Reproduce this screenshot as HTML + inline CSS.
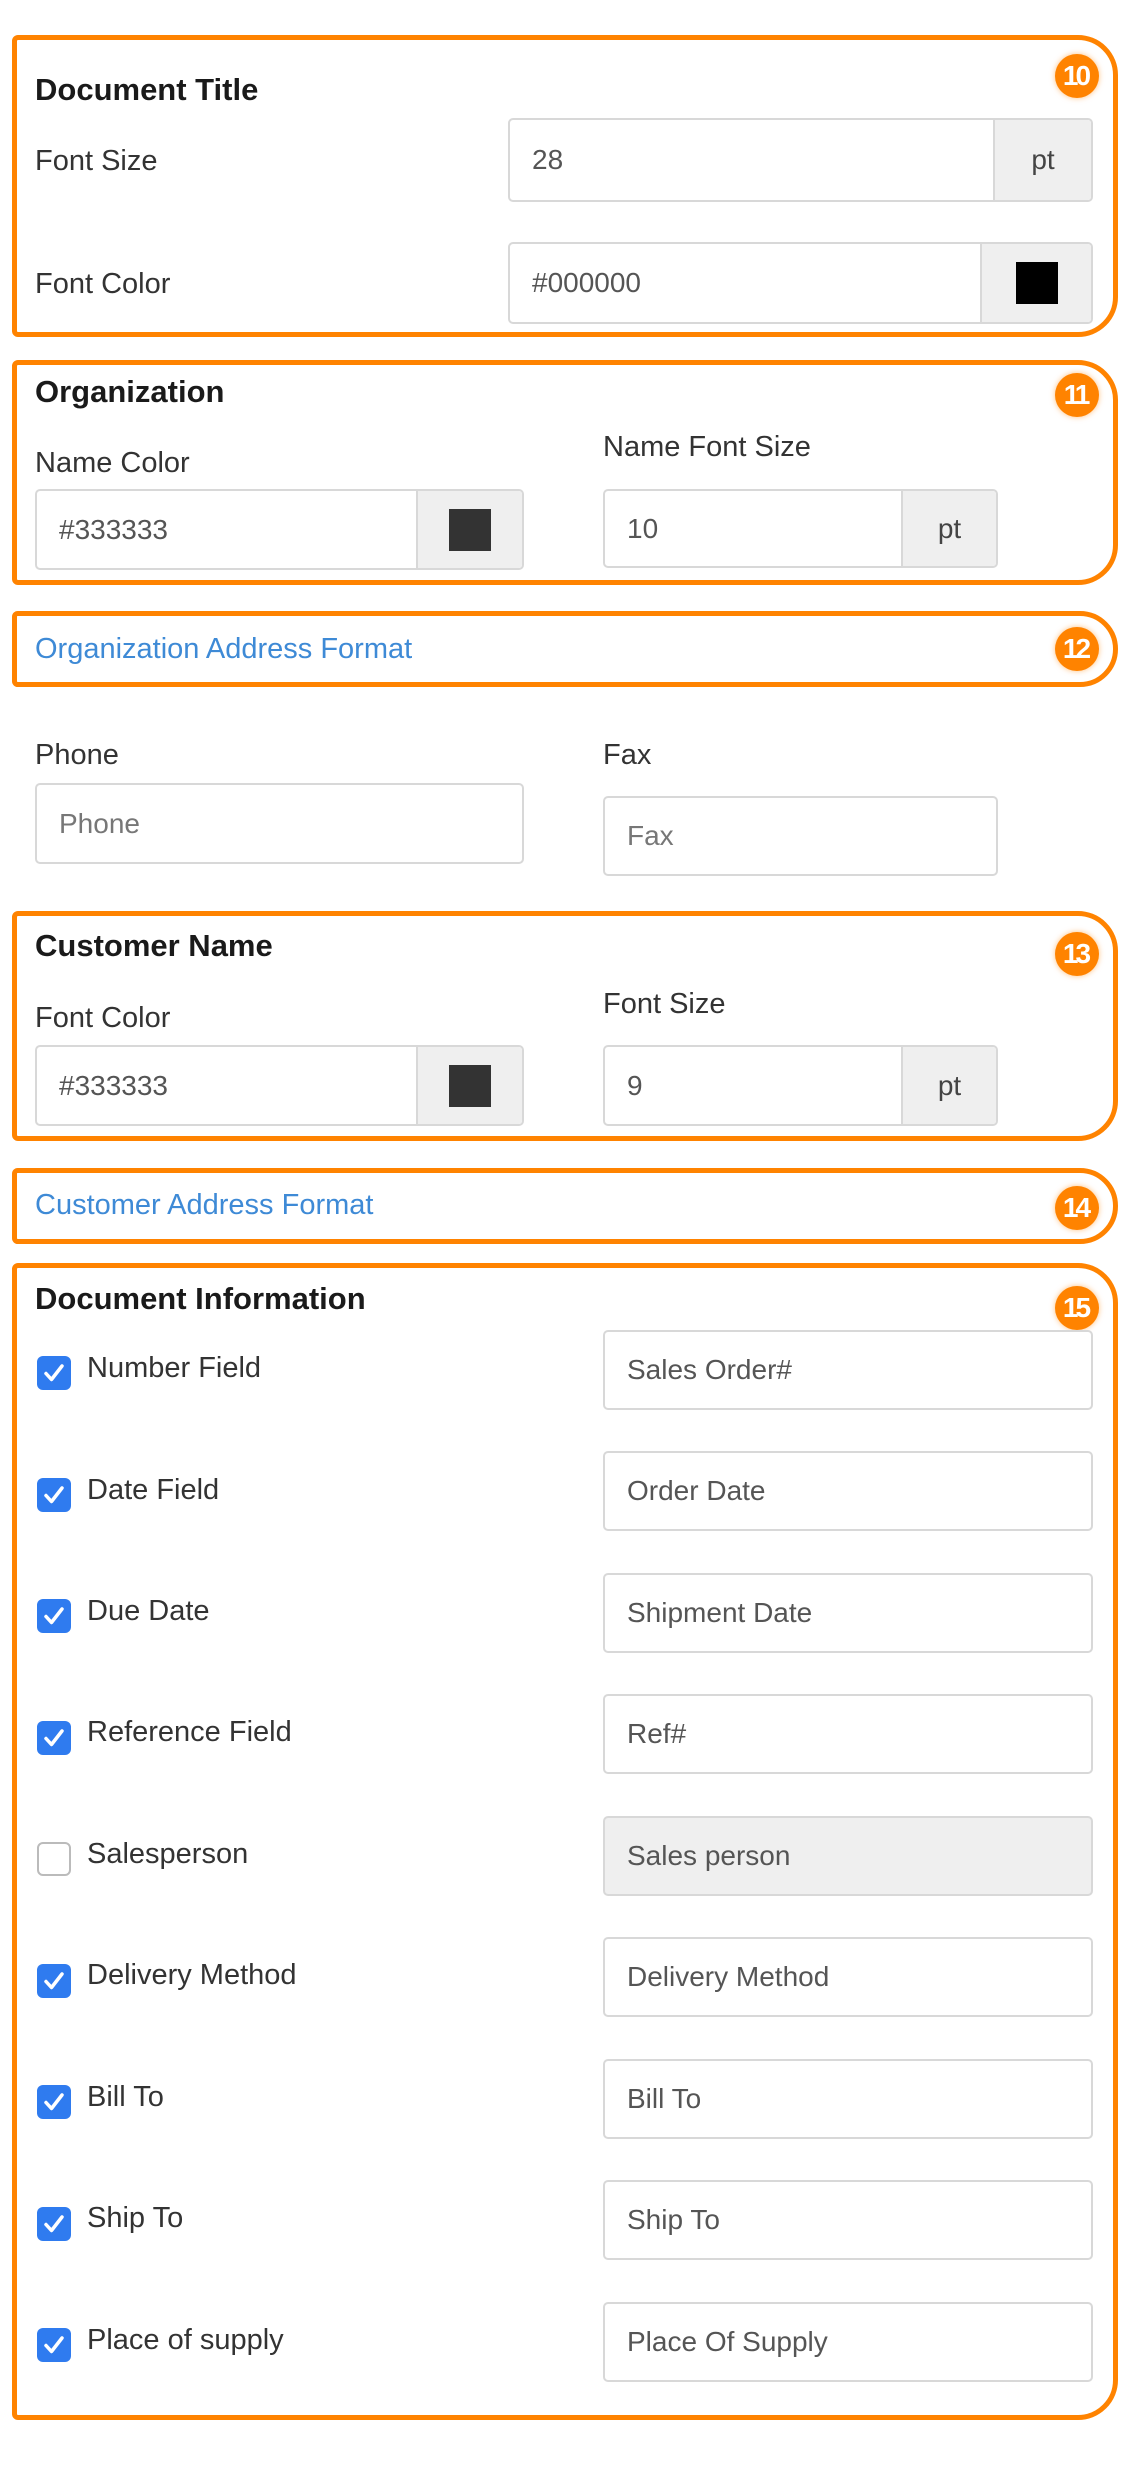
<!DOCTYPE html>
<html><head><meta charset="utf-8"><style>
*{box-sizing:border-box;margin:0;padding:0}
body{width:1124px;height:2468px;background:#fff;position:relative;font-family:"Liberation Sans",Arial,sans-serif;color:#222;overflow:hidden}
.box{position:absolute;left:12px;width:1106px;border:5px solid #ff8300;border-radius:6px 40px 40px 6px}
.badge{position:absolute;left:1055px;width:44px;height:44px;border-radius:50%;background:#ff8300;color:#fff;font-weight:bold;font-size:28px;line-height:44px;text-align:center;letter-spacing:-3px;text-indent:-3px;box-shadow:0 0 6px rgba(255,131,0,.5)}
.t{position:absolute;left:35px;font-size:31px;font-weight:bold;color:#1a1a1a;line-height:1}
.l{position:absolute;font-size:29px;color:#333;line-height:1}
.in{position:absolute;border:2px solid #d8d8d8;border-radius:5px;background:#fff;font-size:28px;color:#555;padding-left:22px;display:flex;align-items:center;overflow:hidden}
.sfx{position:absolute;right:0;top:0;bottom:0;background:#efefef;border-left:2px solid #d8d8d8;display:flex;align-items:center;justify-content:center;color:#444}
.sq{width:42px;height:42px}
.link{position:absolute;left:35px;font-size:29px;color:#3e8ad6;line-height:1}
.cb{position:absolute;left:37px;width:34px;height:34px;border-radius:6px;background:#2f7bef}
.cb.off{background:#fff;border:2px solid #bbb}
</style></head><body>

<div class="box" style="top:35px;height:302px"></div>
<div class="badge" style="top:54px">10</div>
<div class="t" style="top:74px">Document Title</div>
<div class="l" style="left:35px;top:147px">Font Size</div>
<div class="in" style="left:508px;top:118px;width:585px;height:84px">28<div class="sfx" style="width:98px">pt</div></div>
<div class="l" style="left:35px;top:270px">Font Color</div>
<div class="in" style="left:508px;top:242px;width:585px;height:82px">#000000<div class="sfx" style="width:111px"><div class="sq" style="background:#000"></div></div></div>

<div class="box" style="top:360px;height:225px"></div>
<div class="badge" style="top:373px">11</div>
<div class="t" style="top:376px">Organization</div>
<div class="l" style="left:35px;top:449px">Name Color</div>
<div class="in" style="left:35px;top:489px;width:489px;height:81px">#333333<div class="sfx" style="width:106px"><div class="sq" style="background:#333"></div></div></div>
<div class="l" style="left:603px;top:433px">Name Font Size</div>
<div class="in" style="left:603px;top:489px;width:395px;height:79px">10<div class="sfx" style="width:95px">pt</div></div>

<div class="box" style="top:611px;height:76px"></div>
<div class="badge" style="top:627px">12</div>
<div class="link" style="top:635px">Organization Address Format</div>

<div class="l" style="left:35px;top:741px">Phone</div>
<div class="in" style="left:35px;top:783px;width:489px;height:81px;color:#777">Phone</div>
<div class="l" style="left:603px;top:741px">Fax</div>
<div class="in" style="left:603px;top:796px;width:395px;height:80px;color:#777">Fax</div>

<div class="box" style="top:911px;height:230px"></div>
<div class="badge" style="top:932px">13</div>
<div class="t" style="top:930px">Customer Name</div>
<div class="l" style="left:35px;top:1004px">Font Color</div>
<div class="in" style="left:35px;top:1045px;width:489px;height:81px">#333333<div class="sfx" style="width:106px"><div class="sq" style="background:#333"></div></div></div>
<div class="l" style="left:603px;top:990px">Font Size</div>
<div class="in" style="left:603px;top:1045px;width:395px;height:81px">9<div class="sfx" style="width:95px">pt</div></div>

<div class="box" style="top:1168px;height:76px"></div>
<div class="badge" style="top:1186px">14</div>
<div class="link" style="top:1191px">Customer Address Format</div>

<div class="box" style="top:1263px;height:1157px"></div>
<div class="badge" style="top:1286px">15</div>
<div class="t" style="top:1283px">Document Information</div>

<svg width="0" height="0" style="position:absolute"><defs><symbol id="ck" viewBox="0 0 34 34"><path d="M9 17.5l5.5 6L25 10" fill="none" stroke="#fff" stroke-width="3.5" stroke-linecap="round" stroke-linejoin="round"/></symbol></defs></svg>

<div class="cb" style="top:1356px"><svg width="34" height="34"><use href="#ck"/></svg></div>
<div class="l" style="left:87px;top:1354px">Number Field</div>
<div class="in" style="left:603px;top:1330px;width:490px;height:80px">Sales Order#</div>

<div class="cb" style="top:1478px"><svg width="34" height="34"><use href="#ck"/></svg></div>
<div class="l" style="left:87px;top:1476px">Date Field</div>
<div class="in" style="left:603px;top:1451px;width:490px;height:80px">Order Date</div>

<div class="cb" style="top:1599px"><svg width="34" height="34"><use href="#ck"/></svg></div>
<div class="l" style="left:87px;top:1597px">Due Date</div>
<div class="in" style="left:603px;top:1573px;width:490px;height:80px">Shipment Date</div>

<div class="cb" style="top:1721px"><svg width="34" height="34"><use href="#ck"/></svg></div>
<div class="l" style="left:87px;top:1718px">Reference Field</div>
<div class="in" style="left:603px;top:1694px;width:490px;height:80px">Ref#</div>

<div class="cb off" style="top:1842px"></div>
<div class="l" style="left:87px;top:1840px">Salesperson</div>
<div class="in" style="left:603px;top:1816px;width:490px;height:80px;background:#efefef">Sales person</div>

<div class="cb" style="top:1964px"><svg width="34" height="34"><use href="#ck"/></svg></div>
<div class="l" style="left:87px;top:1961px">Delivery Method</div>
<div class="in" style="left:603px;top:1937px;width:490px;height:80px">Delivery Method</div>

<div class="cb" style="top:2085px"><svg width="34" height="34"><use href="#ck"/></svg></div>
<div class="l" style="left:87px;top:2083px">Bill To</div>
<div class="in" style="left:603px;top:2059px;width:490px;height:80px">Bill To</div>

<div class="cb" style="top:2207px"><svg width="34" height="34"><use href="#ck"/></svg></div>
<div class="l" style="left:87px;top:2204px">Ship To</div>
<div class="in" style="left:603px;top:2180px;width:490px;height:80px">Ship To</div>

<div class="cb" style="top:2328px"><svg width="34" height="34"><use href="#ck"/></svg></div>
<div class="l" style="left:87px;top:2326px">Place of supply</div>
<div class="in" style="left:603px;top:2302px;width:490px;height:80px">Place Of Supply</div>

</body></html>
